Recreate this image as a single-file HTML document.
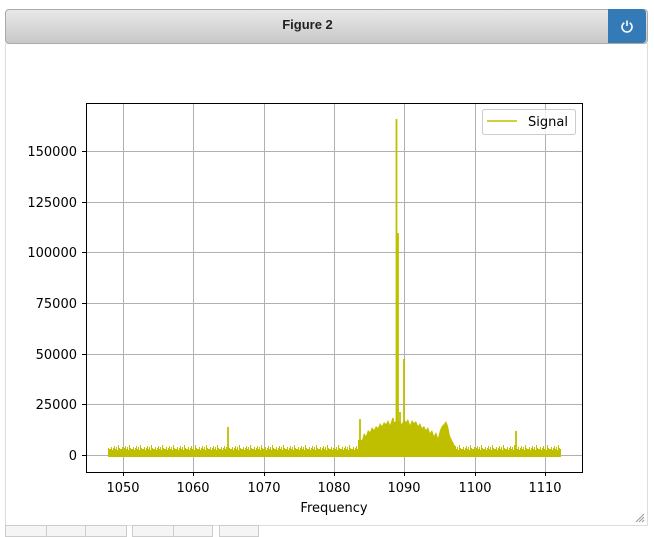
<!DOCTYPE html>
<html><head><style>
body{margin:0;width:654px;height:530px;background:#fff;position:relative;overflow:hidden;font-family:"DejaVu Sans","Liberation Sans",sans-serif}
.hdr{position:absolute;left:5px;top:9px;width:641px;height:33px;border:1px solid #aaa;border-radius:4px;background:linear-gradient(#e8e8e8,#c8c8c8)}
.hdr span{position:absolute;left:0;right:38px;top:7px;text-align:center;font:bold 13px "Liberation Sans",sans-serif;color:#222}
.btn{position:absolute;left:608px;top:9px;width:38px;height:34px;background:#337ab7;border-radius:0 4px 4px 0}
.box{position:absolute;left:5px;top:43px;width:641px;height:482px;border:1px solid #ddd;border-top:none}
.tb{position:absolute;top:525px;height:10px;border:1px solid #ccc;background:#f5f5f5}
</style></head><body>
<div class="hdr"><span>Figure 2</span></div>
<div class="btn"><svg width="38" height="34"><path d="M16.3 13.8 A5 5 0 1 0 21.7 13.8" fill="none" stroke="#fff" stroke-width="1.6"/><line x1="19" y1="11.5" x2="19" y2="17" stroke="#fff" stroke-width="1.6"/></svg></div>
<div class="box"></div>
<div class="tb" style="left:5px;width:40px"></div><div class="tb" style="left:46px;width:38px"></div><div class="tb" style="left:85px;width:40px"></div>
<div class="tb" style="left:132px;width:40px"></div><div class="tb" style="left:173px;width:38px"></div><div class="tb" style="left:219px;width:38px"></div>
<svg width="654" height="530" style="position:absolute;left:0;top:0" font-family="DejaVu Sans, sans-serif" font-size="13">
<defs><pattern id="nz" x="0" y="444" width="11" height="8" patternUnits="userSpaceOnUse">
<path d="M0 8V5H1V3H2V6H3V4H4V2H5V5H6V3H7V6H8V1H9V4H10V5H11V8Z" fill="#bfbf00"/></pattern></defs>
<g stroke="#b0b0b0" stroke-width="1">
<line x1="123.5" y1="103" x2="123.5" y2="472"/><line x1="193.5" y1="103" x2="193.5" y2="472"/><line x1="264.5" y1="103" x2="264.5" y2="472"/><line x1="334.5" y1="103" x2="334.5" y2="472"/><line x1="404.5" y1="103" x2="404.5" y2="472"/><line x1="475.5" y1="103" x2="475.5" y2="472"/><line x1="545.5" y1="103" x2="545.5" y2="472"/>
<line x1="86" y1="455.5" x2="582" y2="455.5"/><line x1="86" y1="404.5" x2="582" y2="404.5"/><line x1="86" y1="354.5" x2="582" y2="354.5"/><line x1="86" y1="303.5" x2="582" y2="303.5"/><line x1="86" y1="252.5" x2="582" y2="252.5"/><line x1="86" y1="202.5" x2="582" y2="202.5"/><line x1="86" y1="151.5" x2="582" y2="151.5"/>
</g>
<rect x="108" y="444" width="453" height="8" fill="url(#nz)"/>
<rect x="108" y="451" width="453" height="6" fill="#bfbf00"/>
<polygon fill="#bfbf00" points="358,451 358,440 362,440 364,433 366,436 368,430 370,432 372,427 374,430 376,426 378,428 380,423 382,426 384,422 386,424 388,420 390,425 392,419 394,422 398,420 402,424 404,418 406,422 408,419 410,425 412,420 414,423 416,421 418,426 420,423 422,428 424,426 426,430 428,427 430,433 432,430 434,436 436,432 438,438 440,430 442,426 444,424 446,421 448,426 450,436 452,440 455,446 455,451"/>
<g stroke="#bfbf00" stroke-width="1.8">
<line x1="228" y1="455" x2="228" y2="427"/><line x1="360" y1="455" x2="360" y2="419"/><line x1="396.5" y1="455" x2="396.5" y2="119"/><line x1="398" y1="455" x2="398" y2="233"/><line x1="404" y1="455" x2="404" y2="359"/><line x1="446" y1="455" x2="446" y2="424"/><line x1="516" y1="455" x2="516" y2="431"/><line x1="400" y1="455" x2="400" y2="412"/><line x1="393" y1="455" x2="393" y2="418"/>
</g>
<rect x="86.5" y="103.5" width="496" height="369" fill="none" stroke="#000"/>
<g stroke="#000"><line x1="123.5" y1="472" x2="123.5" y2="476"/><line x1="193.5" y1="472" x2="193.5" y2="476"/><line x1="264.5" y1="472" x2="264.5" y2="476"/><line x1="334.5" y1="472" x2="334.5" y2="476"/><line x1="404.5" y1="472" x2="404.5" y2="476"/><line x1="475.5" y1="472" x2="475.5" y2="476"/><line x1="545.5" y1="472" x2="545.5" y2="476"/>
<line x1="82" y1="455.5" x2="86" y2="455.5"/><line x1="82" y1="404.5" x2="86" y2="404.5"/><line x1="82" y1="354.5" x2="86" y2="354.5"/><line x1="82" y1="303.5" x2="86" y2="303.5"/><line x1="82" y1="252.5" x2="86" y2="252.5"/><line x1="82" y1="202.5" x2="86" y2="202.5"/><line x1="82" y1="151.5" x2="86" y2="151.5"/></g>
<g text-anchor="middle" fill="#000"><text x="123" y="492">1050</text><text x="193" y="492">1060</text><text x="264" y="492">1070</text><text x="334" y="492">1080</text><text x="404" y="492">1090</text><text x="475" y="492">1100</text><text x="545" y="492">1110</text><text x="334" y="512">Frequency</text></g>
<g text-anchor="end" fill="#000"><text x="77" y="460">0</text><text x="77" y="409">25000</text><text x="77" y="359">50000</text><text x="77" y="308">75000</text><text x="77" y="257">100000</text><text x="77" y="207">125000</text><text x="77" y="156">150000</text></g>
<rect x="482.5" y="109.5" width="93" height="25" rx="2" fill="#fff" fill-opacity="0.8" stroke="#ccc"/>
<line x1="487" y1="121" x2="517" y2="121" stroke="#bfbf00" stroke-width="1.6"/>
<text x="528" y="126">Signal</text>
<path d="M644 514L636 522M644 517L639 522M644 520L642 522" stroke="#999"/>
</svg>
</body></html>
